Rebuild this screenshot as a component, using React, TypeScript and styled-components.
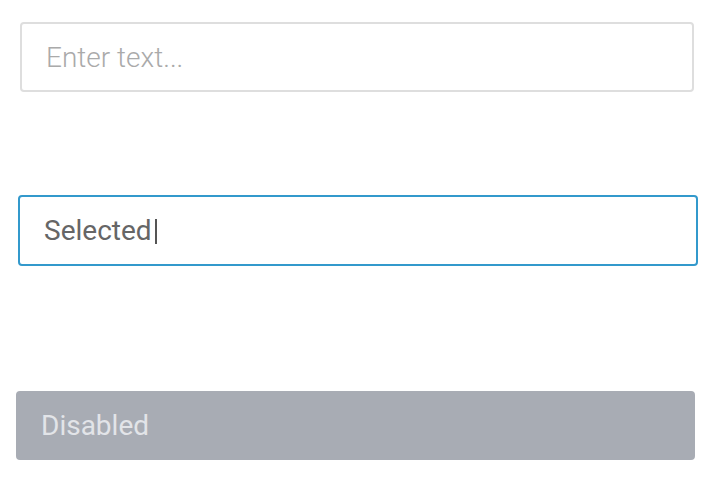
import React from "react";
import styled, { createGlobalStyle } from "styled-components";

const GlobalStyle = createGlobalStyle`
  body {
    margin: 0;
    background: #ffffff;
    font-family: Roboto, "Noto Sans", sans-serif;
  }
`;

const Page = styled.div`
  width: 720px;
  height: 478px;
  display: flex;
  flex-direction: column;
  padding-top: 22px;
  box-sizing: border-box;
`;

type Variant = "empty" | "focused" | "disabled";

// each field sits slightly differently in the original mock
const FieldRow = styled.div<{ $left: number; $right: number; $gapBefore: number }>`
  margin-left: ${(p) => p.$left}px;
  margin-right: ${(p) => p.$right}px;
  margin-top: ${(p) => p.$gapBefore}px;
`;

const Field = styled.div<{ $variant: Variant; $height: number }>`
  height: ${(p) => p.$height}px;
  box-sizing: border-box;
  display: flex;
  align-items: center;
  padding: 0 ${(p) => (p.$variant === "disabled" ? 23 : 24)}px;
  border-radius: 4px;
  font-size: 28px;
  border: 2px solid
    ${(p) =>
      p.$variant === "focused"
        ? "#3399cc"
        : p.$variant === "disabled"
        ? "#a8acb4"
        : "#dedede"};
  background: ${(p) => (p.$variant === "disabled" ? "#a8acb4" : "#ffffff")};
  color: ${(p) =>
    p.$variant === "disabled"
      ? "#e2e4e8"
      : p.$variant === "focused"
      ? "#666666"
      : "#aaaaaa"};
  font-weight: ${(p) => (p.$variant === "empty" ? 300 : 400)};
`;

const Caret = styled.span`
  display: inline-block;
  width: 2px;
  height: 25px;
  margin-left: 3px;
  background: #555555;
  transform: translateY(1px);
`;

export default function App() {
  return (
    <>
      <GlobalStyle />
      <Page>
        <FieldRow $left={20} $right={26} $gapBefore={0}>
          <Field $variant="empty" $height={70}>
            Enter text...
          </Field>
        </FieldRow>
        <FieldRow $left={18} $right={22} $gapBefore={103}>
          <Field $variant="focused" $height={71}>
            Selected
            <Caret />
          </Field>
        </FieldRow>
        <FieldRow $left={16} $right={25} $gapBefore={125}>
          <Field $variant="disabled" $height={69}>
            Disabled
          </Field>
        </FieldRow>
      </Page>
    </>
  );
}
